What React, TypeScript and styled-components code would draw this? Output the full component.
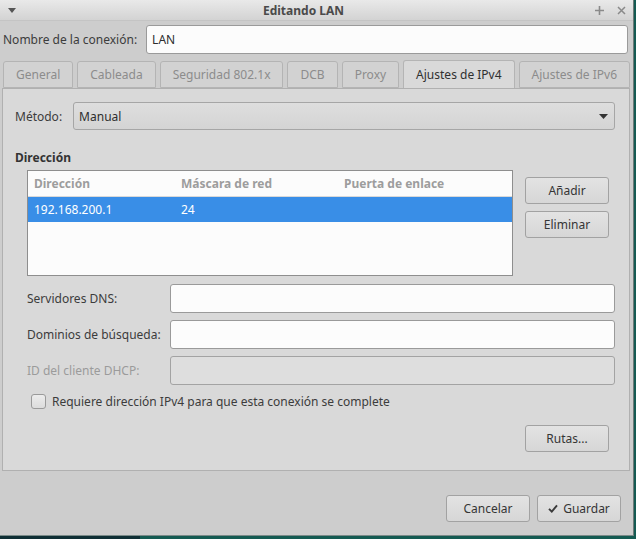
import { createGlobalStyle } from "styled-components"
import styled from "styled-components"

const GlobalStyle = createGlobalStyle`
  html, body {
    margin: 0;
    padding: 0;
  }
  body {
    font-family: "Noto Sans", "Open Sans", sans-serif;
    font-size: 12px;
    color: #3c3c3c;
  }
`

// escritorio detrás de la ventana
const Desktop = styled.div`
  width: 636px;
  height: 539px;
  box-sizing: border-box;
  padding: 0 2px 3px 0;
  background: linear-gradient(to right, #0f2f35 0 140px, #145a52 140px);
  display: flex;
  overflow: hidden;
`

const Window = styled.div`
  flex: 1;
  min-width: 0;
  display: flex;
  flex-direction: column;
  background: #cdcdcd;
  border-right: 1px solid #6e7a78;
  border-bottom: 1px solid #7a8a88;
  overflow: hidden;
`

const TitleBar = styled.div`
  height: 20px;
  flex: none;
  display: flex;
  align-items: center;
  padding: 0 7px 0 8px;
  background: linear-gradient(to bottom, #e9e9e9, #d3d3d3);
  border-bottom: 1px solid #c4c4c4;
`

const Title = styled.div`
  flex: 1;
  text-align: center;
  font-weight: bold;
  font-size: 12px;
  color: #4a4a4a;
  padding-right: 4px;
`

const TitleControls = styled.div`
  display: flex;
  gap: 13px;
  align-items: center;
`

const NameRow = styled.div`
  display: flex;
  align-items: center;
  padding: 4px 5px 0 3px;
  gap: 9px;
`

const Label = styled.span<{ disabled?: boolean }>`
  font-size: 12px;
  color: ${(p) => (p.disabled ? "#9b9b9b" : "#3c3c3c")};
  white-space: nowrap;
`

const TextInput = styled.div<{ disabled?: boolean }>`
  flex: 1;
  height: 29px;
  box-sizing: border-box;
  display: flex;
  align-items: center;
  padding: 0 5px;
  font-size: 12px;
  color: #2e2e2e;
  border: 1px solid ${(p) => (p.disabled ? "#a3a3a3" : "#9a9a9a")};
  border-radius: 3px;
  background: ${(p) => (p.disabled ? "#dedede" : "#fcfcfc")};
`

const TabBar = styled.div`
  display: flex;
  align-items: flex-end;
  gap: 4px;
  padding: 6px 0 0 3px;
  height: 28px;
  position: relative;
  z-index: 1;
`

const Tab = styled.div<{ active?: boolean }>`
  height: ${(p) => (p.active ? "28px" : "27px")};
  box-sizing: border-box;
  padding: 0 12px;
  display: flex;
  align-items: center;
  white-space: nowrap;
  font-size: 12px;
  color: ${(p) => (p.active ? "#303030" : "#8c8c8c")};
  background: ${(p) => (p.active ? "#d9d9d9" : "#d2d2d2")};
  border: 1px solid #b4b4b4;
  border-bottom: ${(p) => (p.active ? "none" : "1px solid #b4b4b4")};
  border-radius: 3px 3px 0 0;
`

const Panel = styled.div`
  margin: 0 3px 0 2px;
  height: 383px;
  box-sizing: border-box;
  background: #d9d9d9;
  border: 1px solid #b0b0b0;
  padding: 13px 14px 0 12px;
  display: flex;
  flex-direction: column;
`

const MethodRow = styled.div`
  display: flex;
  align-items: center;
  gap: 11px;
`

const Combo = styled.div`
  flex: 1;
  height: 28px;
  box-sizing: border-box;
  display: flex;
  align-items: center;
  justify-content: space-between;
  padding: 0 6px 0 5px;
  font-size: 12px;
  color: #2e2e2e;
  border: 1px solid #a6a6a6;
  border-radius: 3px;
  background: linear-gradient(to bottom, #dedede, #d4d4d4);
`

const SectionTitle = styled.div`
  font-weight: bold;
  font-size: 12px;
  color: #333;
  margin-top: 19px;
`

const AddressArea = styled.div`
  display: flex;
  align-items: flex-start;
  gap: 12px;
  margin: 4px 0 0 12px;
`

const Table = styled.div`
  width: 486px;
  height: 106px;
  box-sizing: border-box;
  border: 1px solid #8e8e8e;
  background: #fcfcfc;
`

const Row = styled.div<{ header?: boolean; selected?: boolean }>`
  display: grid;
  grid-template-columns: 147px 163px 1fr;
  height: 25px;
  align-items: stretch;
  background: ${(p) => (p.selected ? "#398ee7" : "transparent")};
  border-bottom: ${(p) => (p.header ? "1px solid #d9d9d9" : "none")};
`

const Cell = styled.div<{ header?: boolean; selected?: boolean }>`
  display: flex;
  align-items: center;
  padding-left: 6px;
  font-size: 12px;
  font-weight: ${(p) => (p.header ? "bold" : "normal")};
  color: ${(p) => (p.header ? "#9d9d9d" : p.selected ? "#ffffff" : "#333")};
  & + & {
    border-left: ${(p) => (p.header ? "1px solid #d9d9d9" : "none")};
  }
`

const ButtonColumn = styled.div`
  display: flex;
  flex-direction: column;
  gap: 7px;
  margin-top: 7px;
`

const Button = styled.div<{ width?: number }>`
  width: ${(p) => p.width ?? 84}px;
  height: 27px;
  box-sizing: border-box;
  display: flex;
  align-items: center;
  justify-content: center;
  gap: 5px;
  font-size: 12px;
  color: #353535;
  border: 1px solid #a2a2a2;
  border-radius: 3px;
  background: linear-gradient(to bottom, #e3e3e3, #d6d6d6);
`

const FormGrid = styled.div`
  display: grid;
  grid-template-columns: 143px 1fr;
  row-gap: 7px;
  align-items: center;
  margin: 8px 0 0 12px;
`

const CheckRow = styled.div`
  display: flex;
  align-items: center;
  gap: 6px;
  margin: 8px 0 0 16px;
`

const CheckBox = styled.div`
  width: 15px;
  height: 15px;
  box-sizing: border-box;
  border: 1px solid #9a9a9a;
  border-radius: 3px;
  background: linear-gradient(to bottom, #ececec, #dcdcdc);
`

const RoutesRow = styled.div`
  display: flex;
  justify-content: flex-end;
  margin-top: 15px;
  padding-right: 6px;
`

const Footer = styled.div`
  display: flex;
  justify-content: flex-end;
  gap: 7px;
  padding: 24px 12px 0 0;
`

function CheckIcon(): JSX.Element {
  return (
    <svg width="10" height="9" viewBox="0 0 10 9">
      <path d="M1 4.8 L3.8 7.6 L9 1.4" fill="none" stroke="#3a3a3a" strokeWidth="1.9" />
    </svg>
  )
}

export default function App(): JSX.Element {
  const tabs: string[] = [
    "General",
    "Cableada",
    "Seguridad 802.1x",
    "DCB",
    "Proxy",
    "Ajustes de IPv4",
    "Ajustes de IPv6",
  ]

  return (
    <Desktop>
      <GlobalStyle />
      <Window>
        <TitleBar>
          <svg width="8" height="5" viewBox="0 0 8 5">
            <path d="M0 0 H8 L4 5 Z" fill="#555" />
          </svg>
          <Title>Editando LAN</Title>
          <TitleControls>
            <svg width="9" height="9" viewBox="0 0 9 9">
              <path d="M4.5 0 V9 M0 4.5 H9" stroke="#8a8a8a" strokeWidth="1.6" />
            </svg>
            <svg width="9" height="9" viewBox="0 0 9 9">
              <path d="M1 1 L8 8 M8 1 L1 8" stroke="#8a8a8a" strokeWidth="1.5" />
            </svg>
          </TitleControls>
        </TitleBar>

        <NameRow>
          <Label>Nombre de la conexión:</Label>
          <TextInput>LAN</TextInput>
        </NameRow>

        <TabBar>
          {tabs.map((t) => (
            <Tab key={t} active={t === "Ajustes de IPv4"}>
              {t}
            </Tab>
          ))}
        </TabBar>

        <Panel>
          <MethodRow>
            <Label>Método:</Label>
            <Combo>
              <span>Manual</span>
              <svg width="9" height="5" viewBox="0 0 9 5">
                <path d="M0 0 H9 L4.5 5 Z" fill="#333" />
              </svg>
            </Combo>
          </MethodRow>

          <SectionTitle>Dirección</SectionTitle>

          <AddressArea>
            <Table>
              <Row header>
                <Cell header>Dirección</Cell>
                <Cell header>Máscara de red</Cell>
                <Cell header>Puerta de enlace</Cell>
              </Row>
              <Row selected>
                <Cell selected>192.168.200.1</Cell>
                <Cell selected>24</Cell>
                <Cell selected />
              </Row>
            </Table>
            <ButtonColumn>
              <Button>Añadir</Button>
              <Button>Eliminar</Button>
            </ButtonColumn>
          </AddressArea>

          <FormGrid>
            <Label>Servidores DNS:</Label>
            <TextInput />
            <Label>Dominios de búsqueda:</Label>
            <TextInput />
            <Label disabled>ID del cliente DHCP:</Label>
            <TextInput disabled />
          </FormGrid>

          <CheckRow>
            <CheckBox />
            <Label>Requiere dirección IPv4 para que esta conexión se complete</Label>
          </CheckRow>

          <RoutesRow>
            <Button>Rutas...</Button>
          </RoutesRow>
        </Panel>

        <Footer>
          <Button>Cancelar</Button>
          <Button>
            <CheckIcon />
            Guardar
          </Button>
        </Footer>
      </Window>
    </Desktop>
  )
}
